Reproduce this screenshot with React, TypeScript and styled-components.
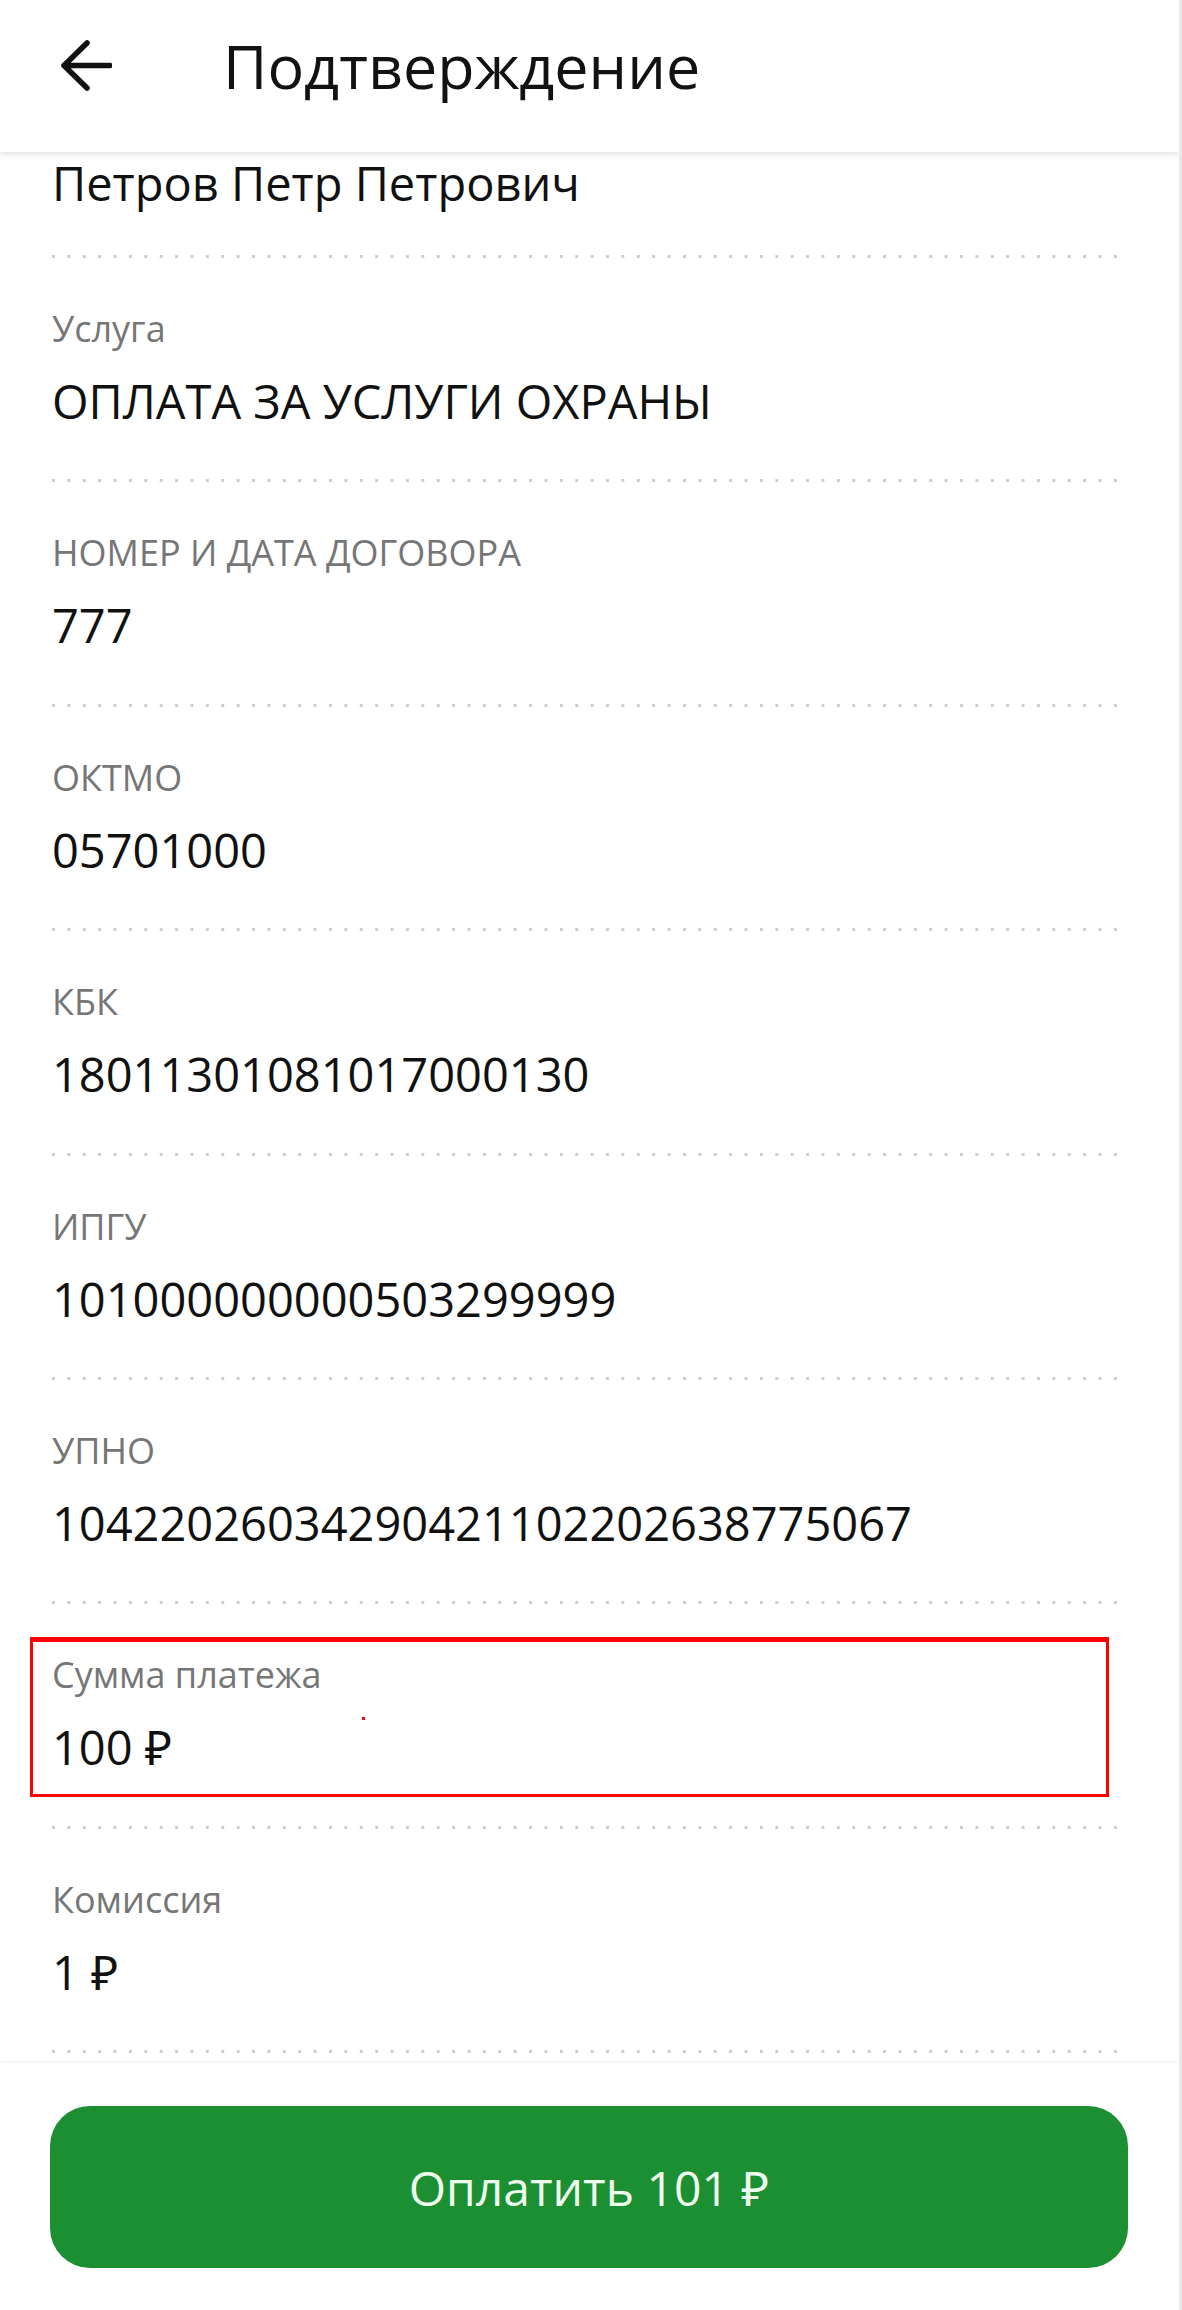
import React from 'react';
import styled, { createGlobalStyle } from 'styled-components';

const GlobalStyle = createGlobalStyle`
  html, body {
    margin: 0;
    padding: 0;
    background: #ffffff;
  }
  body {
    font-family: "Open Sans", "Noto Sans", sans-serif;
    -webkit-font-smoothing: antialiased;
  }
`;

type Field = {
  label?: string;
  value: string;
  highlighted?: boolean;
};

// the first field is scrolled up under the header, only its value shows
const fields: Field[] = [
  { value: 'Петров Петр Петрович' },
  { label: 'Услуга', value: 'ОПЛАТА ЗА УСЛУГИ ОХРАНЫ' },
  { label: 'НОМЕР И ДАТА ДОГОВОРА', value: '777' },
  { label: 'ОКТМО', value: '05701000' },
  { label: 'КБК', value: '18011301081017000130' },
  { label: 'ИПГУ', value: '101000000000503299999' },
  { label: 'УПНО', value: '10422026034290421102202638775067' },
  { label: 'Сумма платежа', value: '100 ₽', highlighted: true },
  { label: 'Комиссия', value: '1 ₽' },
];

const Screen = styled.div`
  width: 1182px;
  height: 2310px;
  display: flex;
  flex-direction: column;
  box-sizing: border-box;
  border-right: 3px solid #e9e9e9;
  background: #ffffff;
  overflow: hidden;
`;

const Header = styled.header`
  position: relative;
  z-index: 2;
  flex: 0 0 152px;
  box-sizing: border-box;
  display: flex;
  align-items: center;
  padding: 0 0 20px 60px;
  background: #ffffff;
  box-shadow: 0 2px 6px rgba(0, 0, 0, 0.12);
`;

const BackButton = styled.button`
  display: flex;
  padding: 0;
  border: 0;
  background: none;
  color: #111111;
  cursor: pointer;
`;

const Title = styled.h1`
  margin: 0 0 0 111px;
  font-size: 61px;
  line-height: 72px;
  font-weight: 400;
  color: #121212;
`;

const Content = styled.main`
  flex: 1 1 auto;
  padding: 0 50px 0 52px;
`;

const Row = styled.section<{ $clipped?: boolean }>`
  padding: ${p => (p.$clipped ? '0 0 41px' : '49px 0 50.4px')};
`;

const FieldBody = styled.div<{ $highlighted?: boolean }>`
  position: relative;
  display: flex;
  flex-direction: column;
  gap: 22px;

  ${p =>
    p.$highlighted &&
    `
    &::before {
      content: '';
      position: absolute;
      left: -22px;
      right: 20px;
      top: -16px;
      bottom: -22px;
      border: 3px solid #ff0000;
      border-top-width: 5px;
    }
    &::after {
      content: '';
      position: absolute;
      left: 310px;
      top: 64px;
      width: 3px;
      height: 3px;
      background: #ff0000;
    }
  `}
`;

const Label = styled.div`
  font-size: 36px;
  line-height: 44px;
  color: #767676;
`;

const Value = styled.div<{ $clipped?: boolean }>`
  font-size: 47px;
  line-height: ${p => (p.$clipped ? '62px' : '56px')};
  color: #111111;
  white-space: nowrap;
`;

const Divider = styled.div`
  height: 3px;
  background-image: linear-gradient(to right, #cdcdcd 0 3px, transparent 3px);
  background-size: 15.4px 3px;
  background-repeat: repeat-x;
`;

const Footer = styled.footer`
  flex: 0 0 247px;
  box-sizing: border-box;
  padding: 43px 51px 0 50px;
  background: #ffffff;
  box-shadow: 0 -1px 3px rgba(0, 0, 0, 0.06);
`;

const PayButton = styled.button`
  width: 100%;
  height: 162px;
  border: 0;
  border-radius: 40px;
  background: #1b8f31;
  color: #effdef;
  font-family: "Open Sans", "Noto Sans", sans-serif;
  font-size: 48px;
  font-weight: 400;
  cursor: pointer;
`;

const BackArrow = () => (
  <svg width="52" height="52" viewBox="0 0 52 52" fill="none">
    <path
      d="M50 25.5H4M27 3L4 25.5L27 48"
      stroke="currentColor"
      strokeWidth="5.5"
      strokeLinecap="round"
      strokeLinejoin="round"
    />
  </svg>
);

export default function App() {
  return (
    <>
      <GlobalStyle />
      <Screen>
        <Header>
          <BackButton aria-label="Назад">
            <BackArrow />
          </BackButton>
          <Title>Подтверждение</Title>
        </Header>
        <Content>
          {fields.map((field, i) => (
            <React.Fragment key={i}>
              <Row $clipped={!field.label}>
                <FieldBody $highlighted={field.highlighted}>
                  {field.label && <Label>{field.label}</Label>}
                  <Value $clipped={!field.label}>{field.value}</Value>
                </FieldBody>
              </Row>
              <Divider />
            </React.Fragment>
          ))}
        </Content>
        <Footer>
          <PayButton>Оплатить 101 ₽</PayButton>
        </Footer>
      </Screen>
    </>
  );
}
